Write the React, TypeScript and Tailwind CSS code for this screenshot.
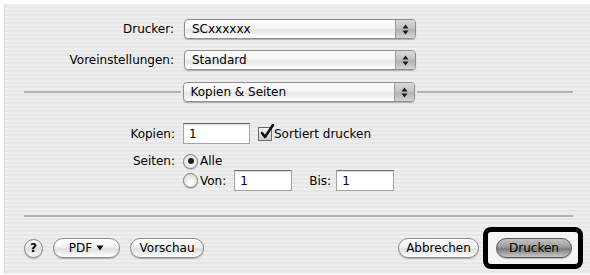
import React from 'react';

const font = { fontFamily: '"DejaVu Sans", "Liberation Sans", sans-serif' };

const Arrows = () => (
  <svg width="7" height="11" viewBox="0 0 7 11">
    <path d="M3.5 0.5 L6.5 4.5 L0.5 4.5 Z" fill="#1a1a1a" />
    <path d="M3.5 10.5 L6.5 6.5 L0.5 6.5 Z" fill="#1a1a1a" />
  </svg>
);

const Popup = ({ value }: { value: string }) => (
  <div className="flex h-[20px] w-[232px] overflow-hidden rounded-[4px] border border-[#8e8e8e] bg-[linear-gradient(#ffffff,#f4f4f4_45%,#e4e4e4_55%,#ffffff)] shadow-[0_1px_1px_rgba(0,0,0,0.25)]">
    <div className="flex flex-1 items-center pl-[7px] text-[12px] text-black">{value}</div>
    <div className="flex w-[20px] items-center justify-center border-l border-[#a0a0a0] bg-[linear-gradient(#d8d8d8,#c4c4c4_45%,#b2b2b2_55%,#d4d4d4)]">
      <Arrows />
    </div>
  </div>
);

const Field = ({ value, w }: { value: string; w: string }) => (
  <div className={`${w} flex h-[21px] items-center border border-[#a4a4a4] border-t-[#6e6e6e] bg-white pl-[5px] text-[12px] text-black shadow-[inset_0_1px_1px_rgba(0,0,0,0.15)]`}>
    {value}
  </div>
);

const Radio = ({ on }: { on?: boolean }) => (
  <div className="flex h-[15px] w-[15px] items-center justify-center rounded-full border border-[#7d7d7d] bg-[radial-gradient(circle_at_50%_70%,#ffffff,#d6d6d6)] shadow-[0_1px_1px_rgba(0,0,0,0.2)]">
    {on && <div className="h-[6px] w-[6px] rounded-full bg-[#1e1e1e]" />}
  </div>
);

const Pill = ({ children, w, dark }: { children: React.ReactNode; w: string; dark?: boolean }) => (
  <div
    className={`${w} flex h-[20px] items-center justify-center rounded-full border text-[12px] text-black shadow-[0_1px_1px_rgba(0,0,0,0.25)] ${
      dark
        ? 'border-[#5a5a5a] bg-[linear-gradient(#c4c4c4,#9a9a9a_45%,#7c7c7c_55%,#c8c8c8)]'
        : 'border-[#8a8a8a] bg-[linear-gradient(#ffffff,#f2f2f2_45%,#dedede_55%,#ffffff)]'
    }`}
  >
    {children}
  </div>
);

export default function App() {
  return (
    <div className="h-[275px] w-[590px] bg-white pl-[4px] pt-[4px]" style={font}>
      <div className="flex h-[270px] flex-col border-l border-[#d8d8d8] bg-[repeating-linear-gradient(180deg,#eeeeee_0px,#eeeeee_2px,#e7e7e7_2px,#e7e7e7_4px)] pt-[15px] text-[12px] text-black">
        <div className="flex items-center">
          <div className="w-[170px] pr-[1px] text-right">Drucker:</div>
          <div className="ml-[9px]"><Popup value="SCxxxxxx" /></div>
        </div>
        <div className="mt-[11px] flex items-center">
          <div className="w-[170px] pr-[1px] text-right">Voreinstellungen:</div>
          <div className="ml-[9px]"><Popup value="Standard" /></div>
        </div>
        <div className="mt-[12px] flex items-center pl-[19px] pr-[17px]">
          <div className="h-[2px] flex-1 bg-[#b4b4b4]" />
          <div className="mx-[2px]"><Popup value="Kopien & Seiten" /></div>
          <div className="h-[2px] flex-1 bg-[#b4b4b4]" />
        </div>

        <div className="mt-[21px] flex items-center">
          <div className="w-[170px] text-right">Kopien:</div>
          <div className="ml-[8px]"><Field value="1" w="w-[67px]" /></div>
          <div className="relative ml-[8px] h-[14px] w-[14px] border border-[#6e6e6e] bg-[linear-gradient(#f4f4f4,#cfcfcf)]">
            <svg className="absolute -top-[4px] left-[1px]" width="15" height="16" viewBox="0 0 15 16">
              <path d="M2 9 L5 13 L13 1" fill="none" stroke="#111" strokeWidth="2.6" strokeLinecap="round" strokeLinejoin="round" />
            </svg>
          </div>
          <div className="ml-[2px]">Sortiert drucken</div>
        </div>

        <div className="mt-[8px] flex items-center">
          <div className="w-[170px] text-right">Seiten:</div>
          <div className="ml-[8px] flex items-center gap-[2px]">
            <Radio on />
            <span>Alle</span>
          </div>
        </div>
        <div className="flex items-center pl-[178px]">
          <Radio />
          <span className="ml-[2px]">Von:</span>
          <div className="ml-[8px]"><Field value="1" w="w-[58px]" /></div>
          <span className="ml-[17px]">Bis:</span>
          <div className="ml-[5px]"><Field value="1" w="w-[58px]" /></div>
        </div>

        <div className="mx-[19px] mr-[17px] mt-[24px] h-[2px] bg-[#b4b4b4]" />

        <div className="mt-[21px] flex items-center pl-[19px] pr-[18px]">
          <div className="flex h-[19px] w-[19px] items-center justify-center rounded-full border border-[#8a8a8a] bg-[linear-gradient(#ffffff,#e0e0e0_55%,#f8f8f8)] text-[12px] font-bold shadow-[0_1px_1px_rgba(0,0,0,0.25)]">
            ?
          </div>
          <div className="ml-[10px]">
            <Pill w="w-[67px]">
              PDF
              <svg className="ml-[4px]" width="8" height="6" viewBox="0 0 8 6">
                <path d="M0.5 0.5 L7.5 0.5 L4 5.5 Z" fill="#111" />
              </svg>
            </Pill>
          </div>
          <div className="ml-[10px]"><Pill w="w-[74px]">Vorschau</Pill></div>
          <div className="flex-1" />
          <Pill w="w-[81px]">Abbrechen</Pill>
          <div className="relative ml-[17px]">
            <div className="pointer-events-none absolute -bottom-[11px] -left-[13px] -right-[11px] -top-[11px] rounded-[8px] border-[5px] border-black bg-[#f5f5f5]" />
            <div className="relative">
              <Pill w="w-[76px]" dark>Drucken</Pill>
            </div>
          </div>
        </div>
      </div>
    </div>
  );
}
